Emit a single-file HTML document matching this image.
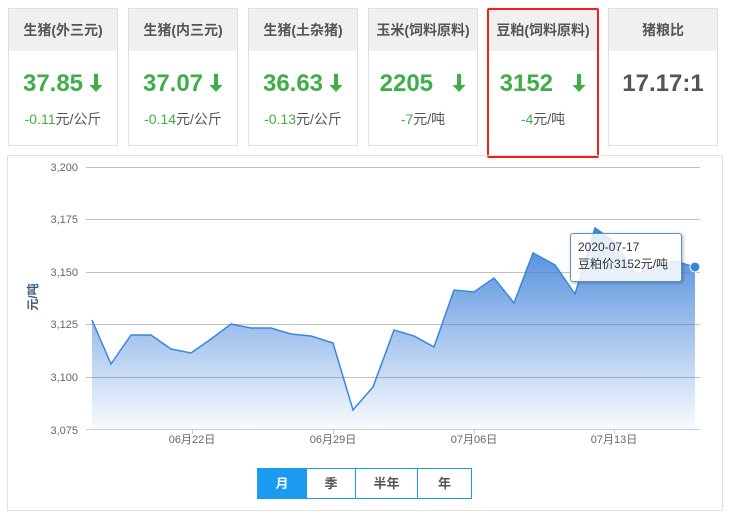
<!DOCTYPE html>
<html><head><meta charset="utf-8"><style>
*{margin:0;padding:0;box-sizing:border-box}
body{width:731px;height:515px;background:#fff;font-family:"Liberation Sans","Noto Sans CJK SC",sans-serif;position:relative;overflow:hidden}
.card{position:absolute;top:8px;width:110px;height:138px;border:1px solid #e0e0e0;background:#fff;text-align:center}
.card .h{height:42px;background:#f0f0f0;line-height:42px;font-size:14px;font-weight:bold;color:#555}
.card .v{margin-top:18px;font-size:24px;font-weight:bold;color:#3fae49;height:30px;line-height:30px}
.card .v svg{display:inline-block;margin-left:6px;vertical-align:-2px}
.card .d{margin-top:10px;font-size:14px;color:#555}
.card .d b{font-weight:normal;color:#3fae49}
.red{position:absolute;left:487px;top:8px;width:112px;height:150px;border:2px solid #f0201a;border-radius:2px}
.chart{position:absolute;left:7px;top:155px;width:716px;height:356px;border:1px solid #e0e0e0}
.btns{position:absolute;left:257px;top:468px;height:31px;border:1px solid #1a9af0;display:flex}
.btns div{height:29px;line-height:29px;text-align:center;font-size:13px;font-weight:bold;color:#555;border-right:1px solid #1a9af0}
.btns div:last-child{border-right:none}
.tip{position:absolute;left:570px;top:233px;width:112px;height:49px;border:1px solid #5b8fd0;border-radius:3px;background:rgba(255,255,255,.85);font-size:12px;color:#333;padding:5px 0 0 7px;line-height:17px;box-shadow:1px 1px 3px rgba(0,0,0,.3)}
</style></head><body>
<div class="card" style="left:8px"><div class="h">生猪(外三元)</div><div class="v">37.85<svg width="14" height="20" viewBox="0 0 14 20"><path d="M5 1h4v11h4.5L7 19 .5 12H5z" fill="#3fae49"/></svg></div><div class="d"><b>-0.11</b>元/公斤</div></div>
<div class="card" style="left:128px"><div class="h">生猪(内三元)</div><div class="v">37.07<svg width="14" height="20" viewBox="0 0 14 20"><path d="M5 1h4v11h4.5L7 19 .5 12H5z" fill="#3fae49"/></svg></div><div class="d"><b>-0.14</b>元/公斤</div></div>
<div class="card" style="left:248px"><div class="h">生猪(土杂猪)</div><div class="v">36.63<svg width="14" height="20" viewBox="0 0 14 20"><path d="M5 1h4v11h4.5L7 19 .5 12H5z" fill="#3fae49"/></svg></div><div class="d"><b>-0.13</b>元/公斤</div></div>
<div class="card" style="left:368px"><div class="h">玉米(饲料原料)</div><div class="v">2205 &nbsp;<svg width="14" height="20" viewBox="0 0 14 20"><path d="M5 1h4v11h4.5L7 19 .5 12H5z" fill="#3fae49"/></svg></div><div class="d"><b>-7</b>元/吨</div></div>
<div class="card" style="left:488px;border:none;top:9px"><div class="h">豆粕(饲料原料)</div><div class="v">3152 &nbsp;<svg width="14" height="20" viewBox="0 0 14 20"><path d="M5 1h4v11h4.5L7 19 .5 12H5z" fill="#3fae49"/></svg></div><div class="d"><b>-4</b>元/吨</div></div>
<div class="card" style="left:608px"><div class="h">猪粮比</div><div class="v" style="color:#555">17.17:1</div></div>
<div class="red"></div>
<div class="chart"></div>
<svg style="position:absolute;left:0;top:0" width="731" height="515">
<defs><linearGradient id="g" x1="0" y1="0" x2="0" y2="1"><stop offset="0" stop-color="#3a7fd8" stop-opacity=".95"/><stop offset="1" stop-color="#3a7fd8" stop-opacity=".03"/></linearGradient></defs>
<g stroke="#c0c0c0" stroke-width="1">
<line x1="86" y1="167.5" x2="700" y2="167.5"/><line x1="86" y1="219.5" x2="700" y2="219.5"/><line x1="86" y1="272.5" x2="700" y2="272.5"/><line x1="86" y1="324.5" x2="700" y2="324.5"/><line x1="86" y1="377.5" x2="700" y2="377.5"/>
</g>
<polygon fill="url(#g)" points="92,429 92,320 111,364 131,335 151,335 171,349 191,353 211,339 231,324 251,328 271,328 291,334 311,336 333,343 353,410 373,387 394,330 414,336 434,347 454,290 474,292 494,278 514,303 533,253 555,265 575,294 595,228 615,242 636,275 655,265 675,261 695,267 695,429"/>
<polyline fill="none" stroke="#3a86dc" stroke-width="1.5" points="92,320 111,364 131,335 151,335 171,349 191,353 211,339 231,324 251,328 271,328 291,334 311,336 333,343 353,410 373,387 394,330 414,336 434,347 454,290 474,292 494,278 514,303 533,253 555,265 575,294 595,228 615,242 636,275 655,265 675,261 695,267"/>
<line x1="86" y1="429.5" x2="700" y2="429.5" stroke="#c0d0e0"/>
<g stroke="#c0d0e0"><line x1="192.5" y1="429" x2="192.5" y2="434"/><line x1="333.5" y1="429" x2="333.5" y2="434"/><line x1="474.5" y1="429" x2="474.5" y2="434"/><line x1="614.5" y1="429" x2="614.5" y2="434"/></g>
<circle cx="695" cy="267" r="5" fill="#3a86dc" stroke="#fff" stroke-width="1"/>
<g font-size="11" fill="#666" text-anchor="end" font-family="Liberation Sans,sans-serif">
<text x="78" y="171">3,200</text><text x="78" y="223">3,175</text><text x="78" y="276">3,150</text><text x="78" y="328">3,125</text><text x="78" y="381">3,100</text><text x="78" y="434">3,075</text></g>
<g font-size="11" fill="#666" text-anchor="middle" font-family="Liberation Sans,Noto Sans CJK SC,sans-serif">
<text x="192" y="443">06月22日</text><text x="333" y="443">06月29日</text><text x="474" y="443">07月06日</text><text x="614" y="443">07月13日</text></g>
<text transform="translate(37,297) rotate(-90)" font-size="12" font-weight="bold" fill="#3a5a80" text-anchor="middle" font-family="Liberation Sans,Noto Sans CJK SC,sans-serif">元/吨</text>
</svg>
<div class="tip">2020-07-17<br>豆粕价3152元/吨</div>
<div class="btns"><div style="width:49px;background:#1a9af0;color:#fff">月</div><div style="width:49px">季</div><div style="width:62px">半年</div><div style="width:53px">年</div></div>
</body></html>
